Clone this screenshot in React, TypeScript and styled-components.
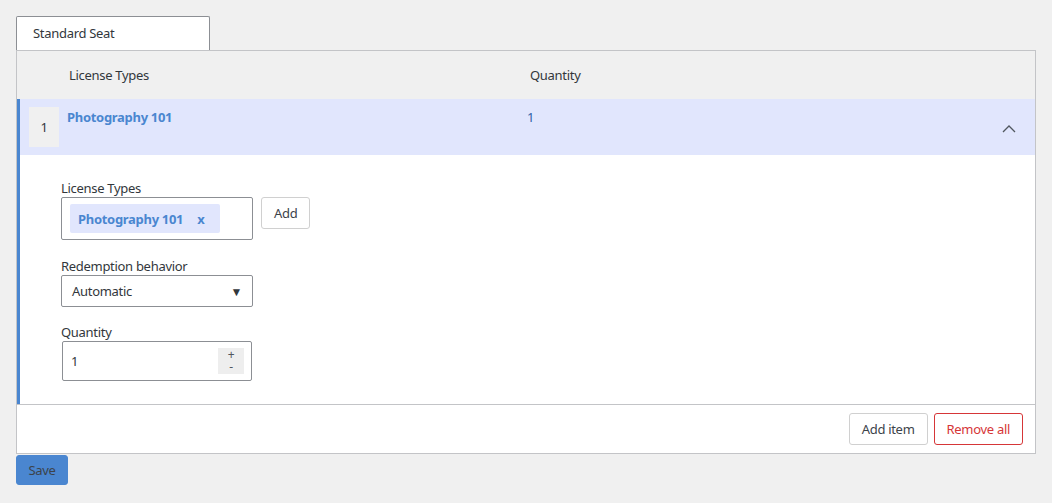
import React, { useState } from "react";
import styled, { createGlobalStyle } from "styled-components";

const GlobalStyle = createGlobalStyle`
  html, body {
    margin: 0;
    padding: 0;
    background: #f0f0f0;
    font-family: "Segoe UI", "Noto Sans", "Open Sans", sans-serif;
    font-size: 13px;
    letter-spacing: -0.3px;
    color: #32373c;
  }
`;

const Page = styled.div`
  padding: 16px 16px 0 16px;
  width: 1020px;
`;

const TabBar = styled.div`
  display: flex;
`;

const Tab = styled.div`
  width: 194px;
  height: 34px;
  background: #fff;
  border: 1px solid #8c8f94;
  border-bottom: none;
  border-radius: 2px 2px 0 0;
  display: flex;
  align-items: center;
  padding: 0 0 1px 16px;
  box-sizing: border-box;
`;

const Panel = styled.div`
  border: 1px solid #c3c4c7;
  background: #fff;
`;

const HeaderRow = styled.div`
  display: grid;
  grid-template-columns: 461px 1fr;
  height: 48px;
  align-items: center;
  background: #f0f0f0;
  padding-left: 52px;
`;

const HeaderCell = styled.div`
  color: #32373c;
`;

const Item = styled.div`
  border-left: 3px solid #4a86d0;
`;

const ItemHead = styled.div`
  display: flex;
  height: 56px;
  background: #e1e6fd;
  padding: 8px 0 0 9px;
  box-sizing: border-box;
`;

const Index = styled.div`
  width: 30px;
  height: 40px;
  background: #f0f0f0;
  display: flex;
  align-items: center;
  justify-content: center;
  color: #32373c;
`;

const ItemTitle = styled.div`
  width: 460px;
  font-weight: 700;
  color: #4a86d0;
  padding-left: 8px;
  margin-top: 1px;
`;

const ItemQty = styled.div`
  color: #2f5fa8;
  margin-top: 1px;
`;

const Toggle = styled.button`
  border: none;
  background: transparent;
  padding: 0;
  margin: 17px 19px 0 auto;
  width: 14px;
  height: 9px;
  cursor: pointer;
  display: flex;
`;

const Body = styled.div`
  padding: 25px 0 23px 41px;
  display: flex;
  flex-direction: column;
`;

const Field = styled.div<{ $gap?: number }>`
  display: flex;
  flex-direction: column;
  margin-bottom: ${(p) => p.$gap ?? 0}px;
`;

const Label = styled.label`
  line-height: 16px;
  margin-bottom: 1px;
`;

const Inline = styled.div`
  display: flex;
  gap: 8px;
  align-items: flex-start;
`;

const TagBox = styled.div`
  width: 192px;
  height: 43px;
  box-sizing: border-box;
  border: 1px solid #8c8f94;
  border-radius: 2px;
  padding: 6px 8px;
  display: flex;
`;

const Chip = styled.span`
  display: flex;
  align-items: center;
  gap: 14px;
  background: #e1e6fd;
  color: #4a86d0;
  font-weight: 700;
  padding: 0 16px 0 8px;
  border-radius: 2px;
  height: 29px;
`;

const Btn = styled.button<{ $danger?: boolean }>`
  font-family: inherit;
  font-size: 13px;
  letter-spacing: inherit;
  background: #fff;
  border: 1px solid ${(p) => (p.$danger ? "#d63638" : "#d0d0d0")};
  color: ${(p) => (p.$danger ? "#d63638" : "#3c434a")};
  border-radius: 3px;
  height: 32px;
  padding: 0 12px;
  cursor: pointer;
`;

const SelectBox = styled.div`
  width: 192px;
  height: 32px;
  box-sizing: border-box;
  border: 1px solid #8c8f94;
  border-radius: 2px;
  display: flex;
  align-items: center;
  justify-content: space-between;
  padding: 0 10px;
  color: #32373c;
`;

const Caret = styled.span`
  font-size: 12px;
  color: #32373c;
`;

const NumberBox = styled.div`
  width: 190px;
  height: 40px;
  margin-left: 1px;
  box-sizing: border-box;
  border: 1px solid #8c8f94;
  border-radius: 2px;
  display: flex;
  align-items: center;
  justify-content: space-between;
  padding: 0 7px 0 8px;
`;

const Spinner = styled.div`
  width: 26px;
  height: 26px;
  background: #eeeeee;
  display: flex;
  align-items: center;
  justify-content: center;
  text-align: center;
  white-space: pre-line;
  line-height: 12px;
  font-size: 12px;
  color: #50575e;
  cursor: pointer;
`;

const Footer = styled.div`
  border-top: 1px solid #c3c4c7;
  height: 48px;
  display: flex;
  justify-content: flex-end;
  align-items: center;
  gap: 6px;
  padding-right: 12px;
`;

const SaveButton = styled.button`
  margin-top: 1px;
  background: #4a86d0;
  border: 1px solid #4a86d0;
  border-radius: 3px;
  color: #3c434a;
  font-family: inherit;
  font-size: 13px;
  letter-spacing: inherit;
  width: 52px;
  height: 30px;
  cursor: pointer;
`;

const ChevronUp = () => (
  <svg width="14" height="9" viewBox="0 0 14 9" fill="none">
    <path d="M1 8 L7 2 L13 8" stroke="#50575e" strokeWidth="1.3" />
  </svg>
);

export default function App() {
  const [qty, setQty] = useState(1);
  return (
    <>
      <GlobalStyle />
      <Page>
        <TabBar>
          <Tab>Standard Seat</Tab>
        </TabBar>
        <Panel>
          <HeaderRow>
            <HeaderCell>License Types</HeaderCell>
            <HeaderCell>Quantity</HeaderCell>
          </HeaderRow>
          <Item>
            <ItemHead>
              <Index>1</Index>
              <ItemTitle>Photography 101</ItemTitle>
              <ItemQty>{qty}</ItemQty>
              <Toggle>
                <ChevronUp />
              </Toggle>
            </ItemHead>
            <Body>
              <Field $gap={18}>
                <Label>License Types</Label>
                <Inline>
                  <TagBox>
                    <Chip>
                      Photography 101 <span>x</span>
                    </Chip>
                  </TagBox>
                  <Btn>Add</Btn>
                </Inline>
              </Field>
              <Field $gap={17}>
                <Label>Redemption behavior</Label>
                <SelectBox>
                  Automatic <Caret>▼</Caret>
                </SelectBox>
              </Field>
              <Field>
                <Label>Quantity</Label>
                <NumberBox>
                  <span>{qty}</span>
                  <Spinner onClick={() => setQty(qty + 1)}>{"+\n-"}</Spinner>
                </NumberBox>
              </Field>
            </Body>
          </Item>
          <Footer>
            <Btn>Add item</Btn>
            <Btn $danger>Remove all</Btn>
          </Footer>
        </Panel>
        <SaveButton>Save</SaveButton>
      </Page>
    </>
  );
}
